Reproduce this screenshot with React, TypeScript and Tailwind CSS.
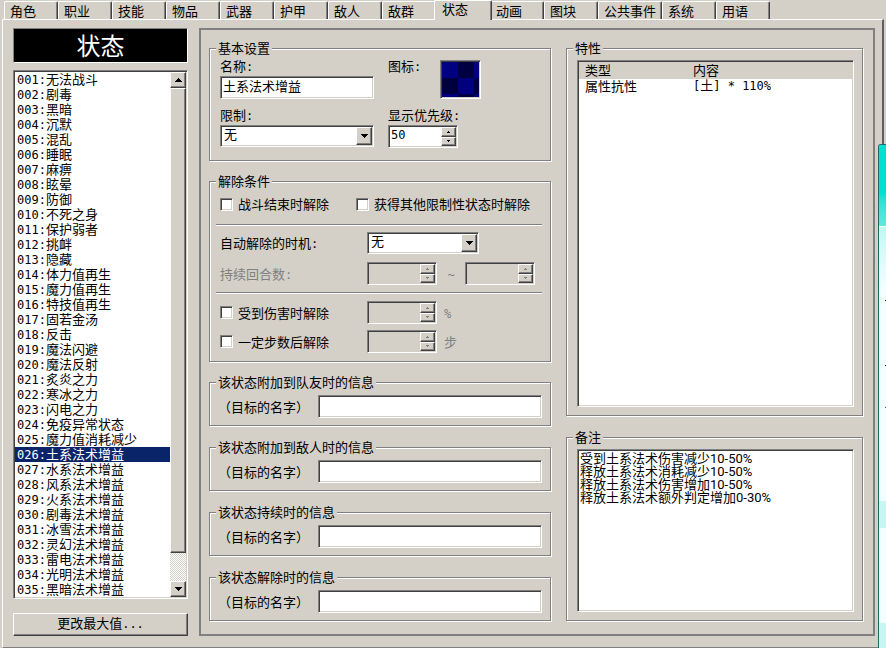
import { useState, type ReactNode } from "react";

const sunken =
  "border border-t-[#808080] border-l-[#808080] border-b-white border-r-white shadow-[inset_1px_1px_0_#404040,inset_-1px_-1px_0_#d4d0c8]";
const raised =
  "border border-t-white border-l-white border-b-[#404040] border-r-[#404040] bg-[#d4d0c8] shadow-[inset_-1px_-1px_0_#808080]";

const tabs = ["角色", "职业", "技能", "物品", "武器", "护甲", "敌人", "敌群", "状态", "动画", "图块", "公共事件", "系统", "用语"];

const states = [
  "无法战斗", "剧毒", "黑暗", "沉默", "混乱", "睡眠", "麻痹", "眩晕", "防御", "不死之身", "保护弱者", "挑衅",
  "隐藏", "体力值再生", "魔力值再生", "特技值再生", "固若金汤", "反击", "魔法闪避", "魔法反射", "炙炎之力",
  "寒冰之力", "闪电之力", "免疫异常状态", "魔力值消耗减少", "土系法术增益", "水系法术增益", "风系法术增益",
  "火系法术增益", "剧毒法术增益", "冰雪法术增益", "灵幻法术增益", "雷电法术增益", "光明法术增益", "黑暗法术增益",
];

const messages = ["该状态附加到队友时的信息", "该状态附加到敌人时的信息", "该状态持续时的信息", "该状态解除时的信息"];

const note = "受到土系法术伤害减少10-50%\n释放土系法术消耗减少10-50%\n释放土系法术伤害增加10-50%\n释放土系法术额外判定增加0-30%";

function Mono({ children }: { children: ReactNode }) {
  return <span className="font-['DejaVu_Sans_Mono',monospace] text-xs leading-none">{children}</span>;
}

function Triangle({ up = false, small = false, muted = false }: { up?: boolean; small?: boolean; muted?: boolean }) {
  const fill = muted ? "#808080" : "#000";
  return small ? (
    <svg width="3" height="2" shapeRendering="crispEdges" aria-hidden="true">
      <path d={up ? "M1 0h1v1h-1zM0 1h3v1h-3z" : "M0 0h3v1h-3zM1 1h1v1h-1z"} fill={fill} />
    </svg>
  ) : (
    <svg width="7" height="4" shapeRendering="crispEdges" aria-hidden="true">
      <path
        d={up ? "M3 0h1v1h-1zM2 1h3v1h-3zM1 2h5v1h-5zM0 3h7v1h-7z" : "M0 0h7v1h-7zM1 1h5v1h-5zM2 2h3v1h-3zM3 3h1v1h-1z"}
        fill={fill}
      />
    </svg>
  );
}

function Group({ title, className = "", children }: { title: string; className?: string; children: ReactNode }) {
  return (
    <fieldset
      className={`min-w-0 border border-[#808080] pr-2 pl-[6px] shadow-[1px_1px_0_#fff,inset_1px_1px_0_#fff] ${className}`}
    >
      <legend className="bg-[#d4d0c8] px-[2px] leading-4">{title}</legend>
      {children}
    </fieldset>
  );
}

function Spin({ id, label, value, disabled = false }: { id?: string; label?: string; value?: string; disabled?: boolean }) {
  return (
    <div className={`${sunken} flex h-[23px] w-[70px] shrink-0 p-px ${disabled ? "" : "bg-white"}`}>
      <input
        id={id}
        aria-label={label}
        defaultValue={value}
        disabled={disabled}
        className="min-w-0 flex-1 bg-transparent px-px pb-[3px] font-['DejaVu_Sans_Mono',monospace] text-xs outline-none"
      />
      <div className="flex w-[15px] flex-col">
        <button type="button" aria-label="增加" disabled={disabled} className={`${raised} flex flex-1 items-center justify-center`}>
          <Triangle up small muted={disabled} />
        </button>
        <button type="button" aria-label="减少" disabled={disabled} className={`${raised} flex flex-1 items-center justify-center`}>
          <Triangle small muted={disabled} />
        </button>
      </div>
    </div>
  );
}

function Drop({ id, className }: { id: string; className: string }) {
  return (
    <div className={`${sunken} relative h-[22px] shrink-0 bg-white p-px ${className}`}>
      <select id={id} className="block h-full w-full appearance-none bg-transparent pr-5 pb-1 pl-[2px] leading-[14px] outline-none">
        <option>无</option>
      </select>
      <span className={`${raised} pointer-events-none absolute inset-y-px right-px flex w-4 items-center justify-center`}>
        <Triangle />
      </span>
    </div>
  );
}

function Check({ children, className = "" }: { children: ReactNode; className?: string }) {
  return (
    <label className={`flex shrink-0 items-center gap-[5px] leading-4 ${className}`}>
      <input type="checkbox" className={`${sunken} h-[13px] w-[13px] appearance-none bg-white checked:bg-[#404040]`} />
      {children}
    </label>
  );
}

function Rule() {
  return <hr className="h-[2px] border-t border-b border-t-[#808080] border-b-white" />;
}

export default function App() {
  const [selected, setSelected] = useState(25);
  return (
    <div className="relative flex min-h-screen flex-col overflow-hidden bg-[#d4d0c8] px-[2px] font-['Noto_Sans_CJK_SC',sans-serif] text-[13px] leading-4 text-black">
      <nav role="tablist" className="flex h-[19px] items-end pl-[2px]">
        {tabs.map((name) => {
          const active = name === "状态";
          const width = active ? "w-[58px] -mx-[2px]" : name === "公共事件" ? "w-16" : "w-[54px]";
          const shape = active ? "relative z-10 -mb-px h-5 pl-[7px] pb-[3px]" : "h-[18px] pl-[5px]";
          return (
            <button
              key={name}
              type="button"
              role="tab"
              aria-selected={active}
              className={`${width} ${shape} shrink-0 rounded-t-[2px] border-t border-r border-l border-t-white border-r-[#404040] border-l-white bg-[#d4d0c8] text-left whitespace-nowrap shadow-[inset_-1px_0_0_#808080]`}
            >
              {name}
            </button>
          );
        })}
      </nav>

      <main className="flex flex-1 gap-[11px] border-t border-r-2 border-b border-l border-t-white border-r-[#606060] border-b-[#808080] border-l-white pt-2 pr-[7px] pb-[11px] pl-[10px]">
        <aside className="flex w-[175px] shrink-0 flex-col">
          <h1 className="flex h-[35px] items-center justify-center border border-t-[#808080] border-r-white border-b-white border-l-[#808080] bg-black pb-[2px] text-2xl leading-8 text-white">
            状态
          </h1>
          <div className={`${sunken} mt-[7px] flex flex-1 bg-white p-px`}>
            <ul className="min-w-0 flex-1">
              {states.map((name, i) => (
                <li key={name}>
                  <button
                    type="button"
                    onClick={() => setSelected(i)}
                    className={`block h-[15px] w-full pb-[2px] pl-[2px] text-left leading-[13px] whitespace-nowrap ${i === selected ? "bg-[#0a246a] text-white" : ""}`}
                  >
                    <Mono>{String(i + 1).padStart(3, "0")}:</Mono>
                    {name}
                  </button>
                </li>
              ))}
            </ul>
            <div className="flex w-4 flex-col bg-[repeating-conic-gradient(#fff_0_25%,#d4d0c8_0_50%)] bg-size-[2px_2px]">
              <button type="button" aria-label="向上滚动" className={`${raised} flex h-4 items-center justify-center`}>
                <Triangle up />
              </button>
              <div className={`${raised} flex-1`} />
              <button type="button" aria-label="向下滚动" className={`${raised} mt-7 flex h-4 items-center justify-center`}>
                <Triangle />
              </button>
            </div>
          </div>
          <button type="button" className={`${raised} mt-[14px] h-[23px] pb-1 leading-4`}>
            更改最大值<Mono>...</Mono>
          </button>
        </aside>

        <section className="grid min-w-0 flex-1 grid-cols-[342fr_297fr] gap-x-[15px] border-2 border-[#808080] pt-[10px] pr-[10px] pb-[13px] pl-2">
          <div className="flex min-w-0 flex-col gap-3">
            <Group title="基本设置">
              <div className="flex gap-[14px] pt-[2px] pb-3 pl-1">
                <div className="w-[154px]">
                  <label htmlFor="name" className="block">名称<Mono>:</Mono></label>
                  <input
                    id="name"
                    defaultValue="土系法术增益"
                    className={`${sunken} mt-[2px] block h-[23px] w-full bg-white px-[2px] pb-[5px] leading-[14px] outline-none`}
                  />
                  <label htmlFor="limit" className="mt-2 block">限制<Mono>:</Mono></label>
                  <Drop id="limit" className="mt-[2px] w-full" />
                </div>
                <div>
                  <div className="flex h-[41px]">
                    <span className="w-[52px]">图标<Mono>:</Mono></span>
                    <button type="button" aria-label="图标" className={`${sunken} mt-[2px] h-[39px] w-[41px] p-px`}>
                      <svg viewBox="0 0 37 35" className="block h-full w-full" shapeRendering="crispEdges" aria-hidden="true">
                        <rect width="37" height="35" fill="#000040" />
                        <path d="M0 0h16v16h-16zM32 0h5v16h-5zM16 16h16v16h-16zM0 32h16v3h-16zM32 32h5v3h-5z" fill="#000080" />
                      </svg>
                    </button>
                  </div>
                  <label htmlFor="priority" className="mt-2 mb-[2px] block">显示优先级<Mono>:</Mono></label>
                  <Spin id="priority" value="50" />
                </div>
              </div>
            </Group>

            <Group title="解除条件">
              <div className="flex pt-[7px] pb-3 pl-1">
                <Check className="w-[136px]">战斗结束时解除</Check>
                <Check>获得其他限制性状态时解除</Check>
              </div>
              <Rule />
              <div className="flex items-center pt-[6px] pl-1">
                <label htmlFor="timing" className="w-[147px]">自动解除的时机<Mono>:</Mono></label>
                <Drop id="timing" className="w-[112px]" />
              </div>
              <div className="flex items-center pt-2 pb-[7px] pl-1 text-[#808080]">
                <span className="w-[147px]">持续回合数<Mono>:</Mono></span>
                <Spin label="最少回合数" disabled />
                <span className="w-7 text-center"><Mono>~</Mono></span>
                <Spin label="最多回合数" disabled />
              </div>
              <Rule />
              <div className="flex items-center pt-[7px] pl-1">
                <Check className="w-[147px]">受到伤害时解除</Check>
                <Spin label="解除概率" disabled />
                <span className="pl-[7px] text-[#808080]"><Mono>%</Mono></span>
              </div>
              <div className="flex items-center pt-[6px] pb-2 pl-1">
                <Check className="w-[147px]">一定步数后解除</Check>
                <Spin label="解除步数" disabled />
                <span className="pl-[7px] text-[#808080]">步</span>
              </div>
            </Group>

            <div className="flex flex-col gap-[13px]">
              {messages.map((title, i) => (
                <Group key={title} title={title}>
                  <div className="flex items-center gap-[9px] pt-[5px] pb-[7px] pl-[2px]">
                    <label htmlFor={`message-${i}`} className="shrink-0">（目标的名字）</label>
                    <input id={`message-${i}`} className={`${sunken} h-[23px] min-w-0 flex-1 bg-white px-[2px] outline-none`} />
                  </div>
                </Group>
              ))}
            </div>
          </div>

          <div className="flex min-w-0 flex-col gap-[13px]">
            <Group title="特性" className="flex flex-1 flex-col">
              <div className={`${sunken} mt-1 mb-2 ml-1 flex-1 bg-white p-px`}>
                <table className="w-full table-fixed border-collapse text-left">
                  <thead className="bg-[#d4d0c8]">
                    <tr className="h-[17px]">
                      <th className="w-[108px] pb-px pl-[6px] leading-4 font-normal">类型</th>
                      <th className="pb-px pl-[6px] leading-4 font-normal">内容</th>
                    </tr>
                  </thead>
                  <tbody>
                    <tr className="h-[15px]">
                      <td className="pb-[3px] pl-[6px] leading-3">属性抗性</td>
                      <td className="pb-[3px] pl-[6px] leading-3"><Mono>[</Mono>土<Mono>] * 110%</Mono></td>
                    </tr>
                  </tbody>
                </table>
              </div>
            </Group>
            <Group title="备注">
              <div className="pt-1 pb-2 pl-1">
                <textarea
                  aria-label="备注"
                  defaultValue={note}
                  className={`${sunken} block h-[163px] w-full resize-none overflow-hidden bg-white px-[2px] pt-[2px] font-[Roboto,'Noto_Sans_CJK_SC',sans-serif] leading-[13px] outline-none`}
                />
              </div>
            </Group>
          </div>
        </section>
      </main>

      <div className="absolute top-36 right-0 bottom-0 z-20 flex w-2 flex-col rounded-tl-[3px] border-t border-l border-[#206a6a] bg-[#f0ffff]">
        <div className="h-[81px] rounded-tl-[2px] bg-linear-to-b from-[#00e0d0] from-60% to-[#60e8e0]" />
        <div className="h-[60px] border-t border-white bg-linear-to-b from-[#c0f8f4] to-[#f0ffff]" />
        <div className="mt-[215px] h-[27px] bg-[#c8f6f3]" />
        <div className="mt-[95px] flex-1 bg-[#c8f6f3]" />
        <span className="absolute top-[155px] right-0 h-px w-px bg-[#0000c0]" />
        <span className="absolute top-[220px] right-0 h-px w-px bg-[#0000c0]" />
        <span className="absolute top-[262px] right-0 h-px w-px bg-[#206a6a]" />
      </div>
    </div>
  );
}
